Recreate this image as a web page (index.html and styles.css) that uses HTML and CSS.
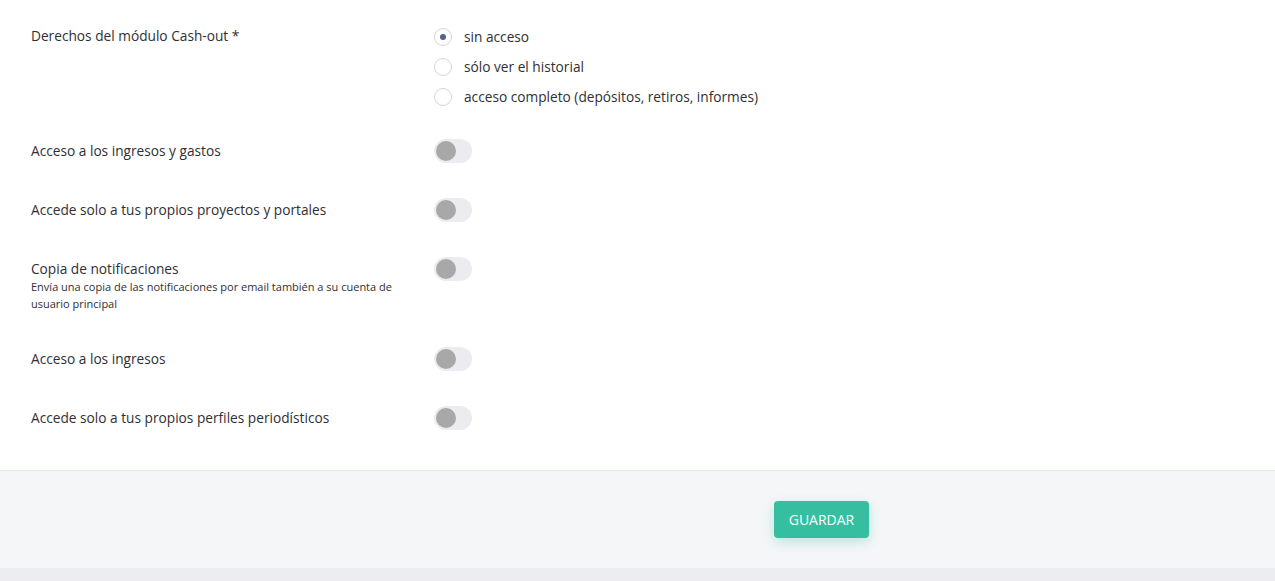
FILE: index.html
```html
<html>
    <head>
        <title>Derechos del usuario</title>

        <link rel="stylesheet" href="styles.css">
    </head>

    <body>
        <div class="Tarjeta">
            <div class="Contenido">

                <!-- Derechos del modulo -->
                <div class="Fila Fila_Radio">
                    <div class="Etiqueta">Derechos del módulo Cash-out *</div>
                    <div class="Opciones">
                        <label class="Opcion"><span class="Radio Activo"></span>sin acceso</label>
                        <label class="Opcion"><span class="Radio"></span>sólo ver el historial</label>
                        <label class="Opcion"><span class="Radio"></span>acceso completo (depósitos, retiros, informes)</label>
                    </div>
                </div>

                <div class="Fila">
                    <div class="Etiqueta">Acceso a los ingresos y gastos</div>
                    <span class="Interruptor"></span>
                </div>

                <div class="Fila">
                    <div class="Etiqueta">Accede solo a tus propios proyectos y portales</div>
                    <span class="Interruptor"></span>
                </div>

                <div class="Fila">
                    <div class="Etiqueta">
                        Copia de notificaciones
                        <div class="Ayuda">Envía una copia de las notificaciones por email también a su cuenta de usuario principal</div>
                    </div>
                    <span class="Interruptor"></span>
                </div>

                <div class="Fila">
                    <div class="Etiqueta">Acceso a los ingresos</div>
                    <span class="Interruptor"></span>
                </div>

                <div class="Fila">
                    <div class="Etiqueta">Accede solo a tus propios perfiles periodísticos</div>
                    <span class="Interruptor"></span>
                </div>

            </div>

            <!-- Guardar -->
            <div class="Pie">
                <button class="Guardar">GUARDAR</button>
            </div>
        </div>
    </body>
</html>
```

FILE: styles.css
```css
body{
    margin: 0;
    background-color: #ececf1;
    font-family: "Open Sans", "Liberation Sans", sans-serif;
    color: #2f2f33;
    font-size: 13.7px;
}

.Tarjeta{
    background-color: white;
}

.Contenido{
    padding: 24px 31px 5px 31px;
}

.Fila{
    display: flex;
    align-items: flex-start;
    margin-bottom: 35px;
}

.Fila_Radio{
    margin-bottom: 30px;
}

.Etiqueta{
    width: 370px;
    margin-right: 33px;
    line-height: 24px;
}

.Ayuda{
    font-size: 11px;
    line-height: 17px;
    margin-top: -3px;
}

.Opciones{
    display: flex;
    flex-direction: column;
    gap: 6px;
    padding-top: 1px;
}

.Opcion{
    display: flex;
    align-items: center;
    line-height: 24px;
}

.Radio{
    width: 16px;
    height: 16px;
    border: 1px solid #d3d6dd;
    border-radius: 50%;
    margin-right: 12px;
    display: flex;
    align-items: center;
    justify-content: center;
}

.Radio.Activo::after{
    content: "";
    width: 6px;
    height: 6px;
    border-radius: 50%;
    background-color: #55608f;
}

.Interruptor{
    width: 38px;
    height: 24px;
    border-radius: 12px;
    background-color: #ebebf0;
    display: flex;
    align-items: center;
    padding-left: 2px;
    box-sizing: border-box;
}

.Interruptor::after{
    content: "";
    width: 20px;
    height: 20px;
    border-radius: 50%;
    background-color: #a8a8a8;
}

.Pie{
    border-top: 1px solid #e8e9ec;
    background-color: #f5f6f8;
    padding: 30px 0 30px 774px;
}

.Guardar{
    width: 95px;
    height: 37px;
    border: none;
    border-radius: 4px;
    background-color: #35bfa0;
    color: white;
    font-family: "Open Sans", "Liberation Sans", sans-serif;
    font-size: 14px;
    box-shadow: 0 4px 12px rgba(53, 191, 160, 0.3);
}
```
